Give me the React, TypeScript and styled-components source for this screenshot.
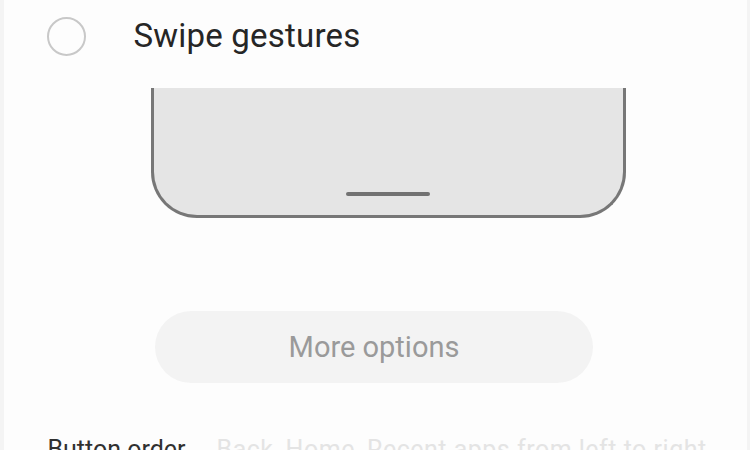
import React from "react";
import styled, { createGlobalStyle } from "styled-components";

const Global = createGlobalStyle`
  html, body {
    margin: 0;
    padding: 0;
    background: #f4f4f4;
    font-family: Roboto, "Noto Sans", "Liberation Sans", sans-serif;
  }
`;

const Screen = styled.div`
  width: 750px;
  height: 450px;
  overflow: hidden;
  display: flex;
  justify-content: center;
`;

const Card = styled.div`
  width: 743px;
  background: #fdfdfd;
  display: flex;
  flex-direction: column;
  & > * {
    flex: none;
  }
`;

const OptionRow = styled.label`
  display: flex;
  align-items: center;
  height: 72px;
  padding-left: 43px;
  gap: 48px;
  box-sizing: border-box;
`;

const Radio = styled.span`
  width: 39px;
  height: 39px;
  box-sizing: border-box;
  border-radius: 50%;
  border: 2px solid #c8c8c8;
  flex: none;
`;

const OptionText = styled.span`
  font-size: 33px;
  color: #262626;
  margin-top: -2px;
  letter-spacing: 0.2px;
`;

const Preview = styled.div`
  display: flex;
  justify-content: center;
  padding-top: 16px;
  padding-left: 26px;
`;

const PhoneBottom = styled.div`
  width: 475px;
  height: 130px;
  box-sizing: border-box;
  background: #e5e5e5;
  border: 3px solid #777777;
  border-top: none;
  border-radius: 0 0 46px 46px;
  display: flex;
  align-items: flex-end;
  justify-content: center;
  padding-bottom: 19px;
`;

const HomeBar = styled.span`
  width: 84px;
  height: 4px;
  border-radius: 2px;
  background: #727272;
`;

const ButtonWrap = styled.div`
  display: flex;
  justify-content: center;
  padding-top: 93px;
  padding-right: 2px;
`;

const MoreButton = styled.button`
  width: 438px;
  height: 72px;
  border: none;
  border-radius: 36px;
  background: #f3f3f3;
  color: #9a9a9a;
  font-family: Roboto, "Noto Sans", "Liberation Sans", sans-serif;
  font-size: 29px;
  padding: 0;
  cursor: pointer;
`;

const SettingRow = styled.div`
  display: flex;
  align-items: flex-start;
  gap: 31px;
  padding: 52px 0 0 44px;
  white-space: nowrap;
`;

const SettingLabel = styled.span`
  font-size: 25px;
  color: #303030;
  line-height: 30px;
`;

const SettingValue = styled.span`
  font-size: 25px;
  color: #e4e4e4;
  line-height: 30px;
  letter-spacing: 0.5px;
`;

export default function App() {
  return (
    <>
      <Global />
      <Screen>
        <Card>
          <OptionRow>
            <Radio />
            <OptionText>Swipe gestures</OptionText>
          </OptionRow>
          <Preview>
            <PhoneBottom>
              <HomeBar />
            </PhoneBottom>
          </Preview>
          <ButtonWrap>
            <MoreButton>More options</MoreButton>
          </ButtonWrap>
          <SettingRow>
            <SettingLabel>Button order</SettingLabel>
            <SettingValue>Back, Home, Recent apps from left to right</SettingValue>
          </SettingRow>
        </Card>
      </Screen>
    </>
  );
}
